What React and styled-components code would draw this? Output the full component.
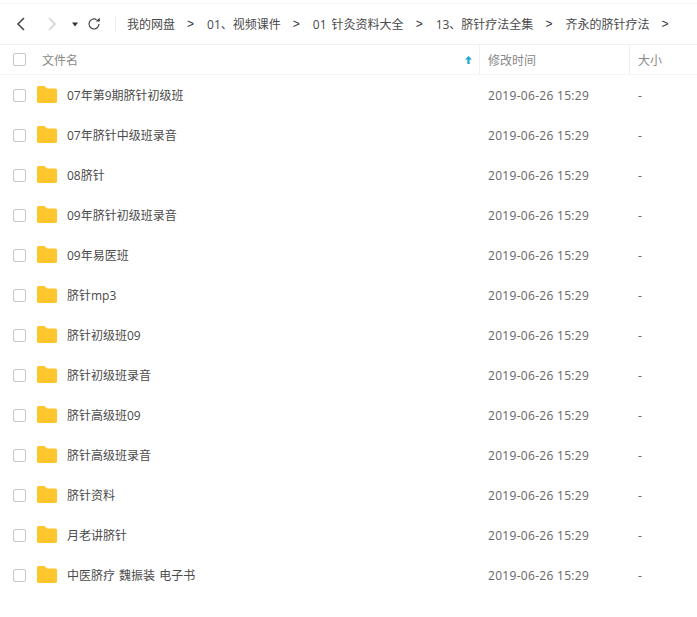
import React from "react";
import styled, { createGlobalStyle } from "styled-components";

const Global = createGlobalStyle`
  html, body { margin: 0; padding: 0; background: #fff; }
  body { font-family: "Open Sans", "Noto Sans CJK SC", sans-serif; }
`;

const Page = styled.div`
  width: 697px;
  height: 617px;
  overflow: hidden;
  background: #fff;
  padding-top: 3px;
  box-sizing: border-box;
`;
const Toolbar = styled.div`
  height: 40px;
  display: flex;
  align-items: center;
  border-top: 1px solid #f4f4f4;
  border-bottom: 1px solid #f0f0f0;
  box-sizing: content-box;
`;
const NavGroup = styled.div`
  width: 115px;
  display: flex;
  align-items: center;
  flex: none;
  padding-left: 16px;
  box-sizing: border-box;
`;
const NavIcon = styled.svg`
  display: block;
  flex: none;
  margin-right: ${(p) => p.$mr || 0}px;
`;
const Crumbs = styled.div`
  flex: 1;
  display: flex;
  align-items: center;
  height: 16px;
  border-left: 1px solid #ececec;
  padding-left: 11px;
  font-size: 12px;
  color: #4a4a4a;
  white-space: nowrap;
  word-spacing: 2px;
`;
const Crumb = styled.span`
  margin-right: 12px;
`;
const Sep = styled.span`
  margin-right: 13px;
  font-family: "Liberation Sans", sans-serif;
  font-size: 12px;
  color: #333;
`;
const Header = styled.div`
  display: grid;
  grid-template-columns: 480px 150px 1fr;
  height: 30px;
  border-bottom: 1px solid #f5f5f5;
  box-sizing: border-box;
  font-size: 12px;
  color: #888;
`;
const HeadCell = styled.div`
  display: flex;
  align-items: center;
  padding-left: ${(p) => p.$pl || 8}px;
  padding-right: 7px;
  border-right: ${(p) => (p.$divider ? "1px solid #f0f0f0" : "none")};
  min-width: 0;
`;
const Box = styled.span`
  width: 13px;
  height: 13px;
  box-sizing: border-box;
  border: 1px solid #c8c8c8;
  border-radius: 2px;
  flex: none;
  background: #fff;
  margin-right: ${(p) => p.$mr}px;
`;
const Grow = styled.span`
  flex: 1;
`;
const Row = styled.div`
  display: grid;
  grid-template-columns: 480px 150px 1fr;
  height: 40px;
  align-items: center;
  font-size: 12px;
  color: #666;
`;
const NameCell = styled.div`
  display: flex;
  align-items: center;
  padding-left: 13px;
  color: #4a4a4a;
`;
const Name = styled.span`
  margin-left: 10px;
  white-space: nowrap;
  word-spacing: 1px;
`;
const FolderIcon = styled.svg`
  display: block;
  flex: none;
  position: relative;
  top: -1px;
`;
const Cell = styled.div`
  padding-left: 8px;
  white-space: nowrap;
  color: #666;
`;
const DateCell = styled(Cell)`
  letter-spacing: 0.3px;
`;

const Folder = () => (
  <FolderIcon width="20" height="17" viewBox="0 0 20 17">
    <path d="M0 1.5 A1.5 1.5 0 0 1 1.5 0 H7.5 L10 2.5 H18.5 A1.5 1.5 0 0 1 20 4 V15.5 A1.5 1.5 0 0 1 18.5 17 H1.5 A1.5 1.5 0 0 1 0 15.5 Z" fill="#fcc62c" />
  </FolderIcon>
);

const names = ["07年第9期脐针初级班","07年脐针中级班录音","08脐针","09年脐针初级班录音","09年易医班","脐针mp3","脐针初级班09","脐针初级班录音","脐针高级班09","脐针高级班录音","脐针资料","月老讲脐针","中医脐疗 魏振装 电子书"];
const crumbs = ["我的网盘","01、视频课件","01 针灸资料大全","13、脐针疗法全集","齐永的脐针疗法"];

export default function App() {
  return (
    <Page>
      <Global />
      <Toolbar>
        <NavGroup>
          <NavIcon $mr={21} width="10" height="14" viewBox="0 0 10 14">
            <path d="M8 1 L2 7 L8 13" fill="none" stroke="#444" strokeWidth="1.5" />
          </NavIcon>
          <NavIcon $mr={15} width="10" height="14" viewBox="0 0 10 14">
            <path d="M2 1 L8 7 L2 13" fill="none" stroke="#d0d0d0" strokeWidth="1.5" />
          </NavIcon>
          <NavIcon $mr={9} width="6" height="5" viewBox="0 0 6 5">
            <path d="M0 0.5 H6 L3 4.5 Z" fill="#333" />
          </NavIcon>
          <NavIcon width="14" height="14" viewBox="0 0 14 14">
            <path d="M12 7 A5 5 0 1 1 9.6 2.7" fill="none" stroke="#444" strokeWidth="1.2" />
            <path d="M8.6 4.6 L13 4.6 L12.6 0.8 Z" fill="#444" />
          </NavIcon>
        </NavGroup>
        <Crumbs>
          {crumbs.map((c) => (
            <React.Fragment key={c}>
              <Crumb>{c}</Crumb>
              <Sep>&gt;</Sep>
            </React.Fragment>
          ))}
        </Crumbs>
      </Toolbar>
      <Header>
        <HeadCell $pl={13} $divider>
          <Box $mr={16} />
          <span>文件名</span>
          <Grow />
          <svg width="7" height="8" viewBox="0 0 7 8"><path d="M3.5 0 L7 3.6 H4.6 V8 H2.4 V3.6 H0 Z" fill="#1ea5d8" /></svg>
        </HeadCell>
        <HeadCell $divider>修改时间</HeadCell>
        <HeadCell>大小</HeadCell>
      </Header>
      {names.map((n) => (
        <Row key={n}>
          <NameCell>
            <Box $mr={11} />
            <Folder />
            <Name>{n}</Name>
          </NameCell>
          <DateCell>2019-06-26 15:29</DateCell>
          <Cell>-</Cell>
        </Row>
      ))}
    </Page>
  );
}
